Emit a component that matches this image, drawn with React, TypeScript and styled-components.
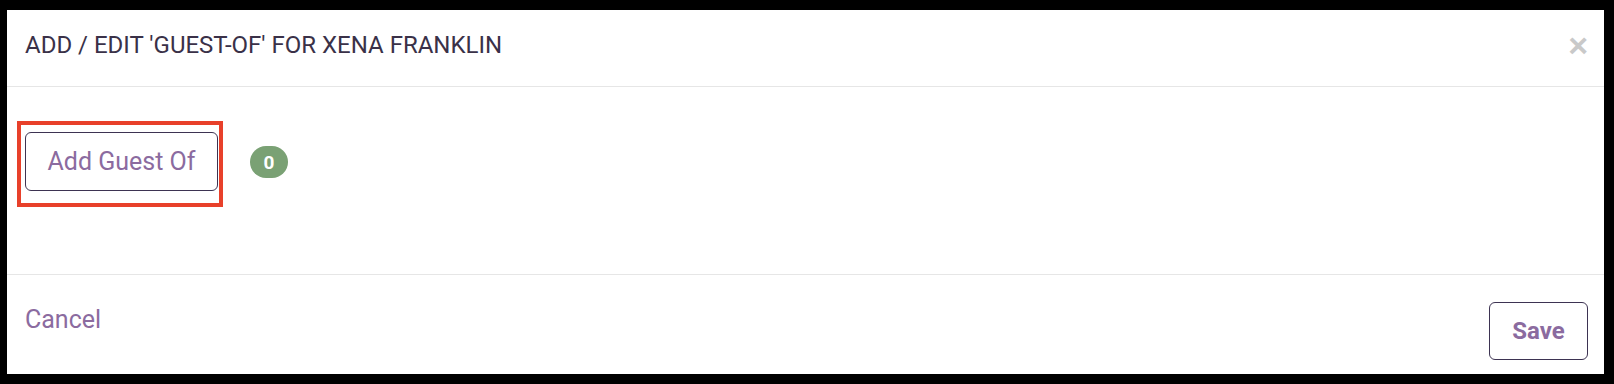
import React from 'react'
import styled, { createGlobalStyle } from 'styled-components'

const GlobalStyle = createGlobalStyle`
  html, body {
    margin: 0;
    padding: 0;
    background: #000;
  }
  body {
    font-family: Roboto, "Liberation Sans", Arial, sans-serif;
  }
`

export default function App() {
  const guestCount = 0

  return (
    <>
      <GlobalStyle />
      <Frame>
        <Modal>
          <Header>
            <Title>ADD / EDIT 'GUEST-OF' FOR XENA FRANKLIN</Title>
            <Close aria-label="Close">×</Close>
          </Header>
          <Body>
            <Highlight>
              <OutlineButton>Add Guest Of</OutlineButton>
            </Highlight>
            <Badge>{guestCount}</Badge>
          </Body>
          <Footer>
            <LinkButton>Cancel</LinkButton>
            <OutlineButton $bold $compact>Save</OutlineButton>
          </Footer>
        </Modal>
      </Frame>
    </>
  )
}

const Frame = styled.div`
  height: 384px;
  box-sizing: border-box;
  padding: 10px 10px 10px 7px;
  display: flex;
`

const Modal = styled.div`
  flex: 1;
  background: #fff;
  display: flex;
  flex-direction: column;
`

const Header = styled.div`
  height: 77px;
  box-sizing: border-box;
  border-bottom: 1px solid #e6e6e6;
  padding: 0 16px 6px 18px;
  display: flex;
  align-items: center;
  justify-content: space-between;
`

const Title = styled.h4`
  margin: 0;
  font-size: 24px;
  font-weight: 400;
  color: #3a3148;
`

const Close = styled.button`
  border: none;
  background: none;
  padding: 0;
  font-family: "Liberation Sans", Arial, sans-serif;
  font-size: 34px;
  font-weight: 700;
  line-height: 1;
  color: #c9c9c9;
  cursor: pointer;
`

const Body = styled.div`
  height: 188px;
  box-sizing: border-box;
  border-bottom: 1px solid #e6e6e6;
  padding: 45px 18px 0 18px;
  display: flex;
  align-items: flex-start;
  gap: 32px;
`

const Highlight = styled.div`
  position: relative;
  display: inline-flex;

  &::after {
    content: '';
    position: absolute;
    left: -8px;
    top: -11px;
    right: -5px;
    bottom: -16px;
    border: 4px solid #e8402a;
    pointer-events: none;
  }
`

const OutlineButton = styled.button<{ $bold?: boolean; $compact?: boolean }>`
  box-sizing: border-box;
  height: ${p => (p.$compact ? '58px' : '59px')};
  padding: 0 ${p => (p.$compact ? '22px' : '21px')};
  min-width: ${p => (p.$compact ? '99px' : '193px')};
  border: 1px solid #3d3352;
  border-radius: 6px;
  background: #fff;
  font-family: Roboto, "Liberation Sans", Arial, sans-serif;
  font-size: ${p => (p.$bold ? '24px' : '25px')};
  font-weight: ${p => (p.$bold ? 700 : 400)};
  color: #8b6b9f;
  cursor: pointer;
`

const Badge = styled.span`
  margin-top: 14px;
  min-width: 38px;
  height: 32px;
  box-sizing: border-box;
  padding: 0 10px;
  border-radius: 16px;
  background: #7aa174;
  color: #fff;
  font-size: 19px;
  font-weight: 700;
  display: inline-flex;
  align-items: center;
  justify-content: center;
`

const Footer = styled.div`
  flex: 1;
  box-sizing: border-box;
  padding: 27px 16px 0 18px;
  display: flex;
  align-items: flex-start;
  justify-content: space-between;
`

const LinkButton = styled.button`
  border: none;
  background: none;
  padding: 0;
  margin-top: 3px;
  font-family: Roboto, "Liberation Sans", Arial, sans-serif;
  font-size: 25px;
  color: #8b6b9f;
  cursor: pointer;
`
